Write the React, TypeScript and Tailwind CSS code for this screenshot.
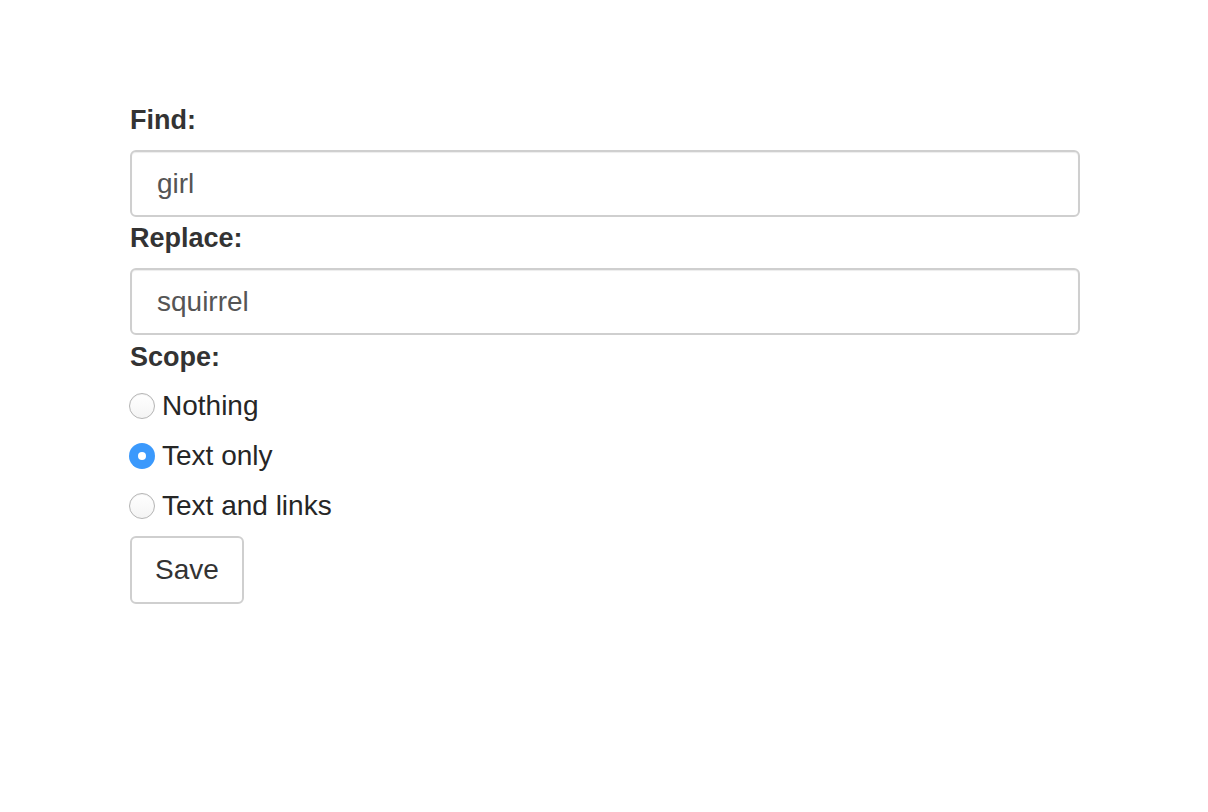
import { useState } from "react";

const font = { fontFamily: '"Liberation Sans", Arial, sans-serif' };

function Radio({ checked, label, onClick }: { checked: boolean; label: string; onClick: () => void }) {
  return (
    <label onClick={onClick} className="flex h-[50px] cursor-pointer items-center">
      {checked ? (
        <span className="ml-[-1px] flex h-[26px] w-[26px] items-center justify-center rounded-full bg-[#3b99fc]">
          <span className="h-[8px] w-[8px] rounded-full bg-white" />
        </span>
      ) : (
        <span className="ml-[-1px] h-[26px] w-[26px] rounded-full border border-[#b4b4b4] bg-gradient-to-b from-white to-[#f4f4f4] shadow-[inset_0_1px_1px_rgba(0,0,0,0.05)]" />
      )}
      <span className="ml-[7px] text-[28px] leading-[34px] text-[#262626]">{label}</span>
    </label>
  );
}

export default function App() {
  const [scope, setScope] = useState("text");
  const [find, setFind] = useState("girl");
  const [replace, setReplace] = useState("squirrel");

  return (
    <div style={font} className="min-h-[812px] w-[1208px] bg-white pl-[130px] pt-[103px] text-[#333]">
      <div className="w-[950px]">
        <label className="block text-[27px] font-bold leading-[34px]">Find:</label>
        <input
          value={find}
          onChange={(e) => setFind(e.target.value)}
          className="mt-[13px] block h-[67px] w-full rounded-[6px] border-2 border-[#cfcfcf] px-[25px] text-[28px] text-[#555] shadow-[inset_0_1px_1px_rgba(0,0,0,0.075)] outline-none"
          style={font}
        />
        <label className="mt-[4px] block text-[27px] font-bold leading-[34px]">Replace:</label>
        <input
          value={replace}
          onChange={(e) => setReplace(e.target.value)}
          className="mt-[13px] block h-[67px] w-full rounded-[6px] border-2 border-[#cfcfcf] px-[25px] text-[28px] text-[#555] shadow-[inset_0_1px_1px_rgba(0,0,0,0.075)] outline-none"
          style={font}
        />
        <label className="mt-[5px] block text-[27px] font-bold leading-[34px]">Scope:</label>
        <div className="mt-[7px] flex flex-col">
          <Radio checked={scope === "nothing"} label="Nothing" onClick={() => setScope("nothing")} />
          <Radio checked={scope === "text"} label="Text only" onClick={() => setScope("text")} />
          <Radio checked={scope === "links"} label="Text and links" onClick={() => setScope("links")} />
        </div>
        <button
          style={font}
          className="mt-[5px] flex h-[68px] w-[114px] items-center justify-center rounded-[6px] border-2 border-[#cfcfcf] bg-white text-[28px] text-[#333]"
        >
          Save
        </button>
      </div>
    </div>
  );
}
